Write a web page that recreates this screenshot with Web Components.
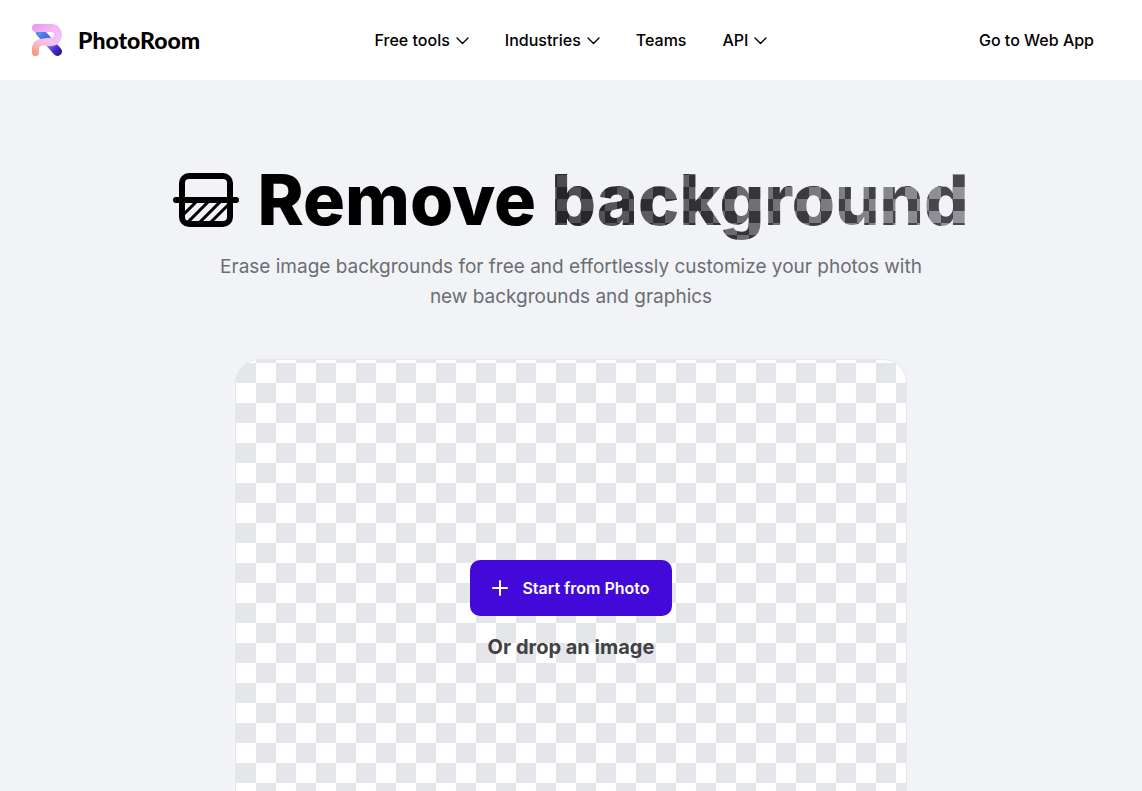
<!DOCTYPE html>
<html lang="en">
<head>
<meta charset="utf-8">
<meta name="viewport" content="width=device-width, initial-scale=1">
<title>Remove background - PhotoRoom</title>
<style>
html { background: #f1f3f7; }
body { margin: 0; font-family: Inter, "Noto Sans", sans-serif; color: #000; }
</style>
</head>
<body>
<pr-header>
  <pr-logo slot="brand"></pr-logo>
  <pr-nav-item menu>Free tools</pr-nav-item>
  <pr-nav-item menu>Industries</pr-nav-item>
  <pr-nav-item>Teams</pr-nav-item>
  <pr-nav-item menu>API</pr-nav-item>
  <pr-nav-item slot="action">Go to Web App</pr-nav-item>
</pr-header>
<main>
  <pr-hero>
    Remove
    <span slot="faded">background</span>
    <span slot="lead">Erase image backgrounds for free and effortlessly customize your photos with new backgrounds and graphics</span>
  </pr-hero>
  <pr-dropzone>
    <pr-button>Start from Photo</pr-button>
    <span slot="hint">Or drop an image</span>
  </pr-dropzone>
</main>
<script>
const define = (name, html, setup) => {
  const template = document.createElement('template');
  template.innerHTML = html;
  customElements.define(name, class extends HTMLElement {
    constructor() {
      super();
      this.attachShadow({ mode: 'open' }).append(template.content.cloneNode(true));
    }
    connectedCallback() { if (setup) setup(this, this.shadowRoot); }
  });
};

define('pr-header', `
<style>
:host { display: block; background: #fff; }
header { display: grid; grid-template-columns: 1fr auto 1fr; align-items: center; height: 80px; padding: 0 48px 0 32px; }
nav { display: flex; gap: 36px; margin-left: 16px; }
.action { justify-self: end; }
</style>
<header>
  <slot name="brand"></slot>
  <nav aria-label="Main"><slot></slot></nav>
  <div class="action"><slot name="action"></slot></div>
</header>`);

define('pr-logo', `
<style>
:host { display: block; }
a { display: flex; width: fit-content; align-items: center; gap: 16px; color: #000; text-decoration: none; font: 900 23px/32px Lato, sans-serif; }
svg { display: block; }
</style>
<a href="#">
<svg width="30" height="32" viewBox="0 0 30 32" fill="none" stroke-linecap="round" aria-hidden="true">
  <defs>
    <linearGradient id="blue" x1="4" y1="6" x2="27" y2="30" gradientUnits="userSpaceOnUse">
      <stop offset="0" stop-color="#4bb0f6"/><stop offset=".35" stop-color="#4f66e0"/><stop offset=".6" stop-color="#8a7bf0"/><stop offset=".8" stop-color="#4b30cb"/><stop offset="1" stop-color="#2d179f"/>
    </linearGradient>
    <linearGradient id="pink" x1="4" y1="0" x2="22" y2="22" gradientUnits="userSpaceOnUse">
      <stop offset="0" stop-color="#e99af0"/><stop offset=".5" stop-color="#f7b4f6"/><stop offset="1" stop-color="#f0c4fb"/>
    </linearGradient>
    <linearGradient id="peach" x1="3" y1="32" x2="12" y2="15" gradientUnits="userSpaceOnUse">
      <stop offset="0" stop-color="#f79372"/><stop offset=".5" stop-color="#f6b6b5"/><stop offset="1" stop-color="#f4c4f5"/>
    </linearGradient>
  </defs>
  <path d="M8 8l17.500 19.500" stroke="url(#blue)" stroke-width="9"/>
  <path d="M4 4H19c4.500 0 7 3 7 7s-3 7-7 7h-4" stroke="url(#pink)" stroke-width="8"/>
  <path d="M3.500 28.500V25c0-4.500 3-7 7.500-7h5" stroke="url(#peach)" stroke-width="7"/>
</svg>
<span>PhotoRoom</span>
</a>`);

define('pr-nav-item', `
<style>
:host { display: block; }
button, a { display: flex; align-items: center; gap: 6px; padding: 0; border: 0; background: none; color: #000; text-decoration: none; font: 500 16px/24px Inter, sans-serif; cursor: pointer; white-space: nowrap; }
svg { display: block; margin-top: 1px; }
</style>
<a href="#"><slot></slot></a>`, (host, root) => {
  if (!host.hasAttribute('menu') || root.querySelector('button')) return;
  const button = document.createElement('button');
  button.type = 'button';
  button.setAttribute('aria-haspopup', 'true');
  button.innerHTML = '<slot></slot><svg width="13" height="8" viewBox="0 0 13 8" fill="none" stroke="#000" stroke-width="1.400" stroke-linecap="round" stroke-linejoin="round" aria-hidden="true"><path d="M1 1l5.500 5.500L12 1"/></svg>';
  root.querySelector('a').replaceWith(button);
});

define('pr-hero', `
<style>
:host { display: block; padding: 75px 24px 0; text-align: center; }
.title { display: flex; justify-content: center; align-items: center; gap: 18px; }
svg { display: block; flex: none; }
h1 { margin: 0; font: 800 70px/90px Inter, sans-serif; }
.faded {
  display: inline-block; line-height: 90px; color: transparent;
  background:
    conic-gradient(transparent 25%, rgb(0 0 0 / 50%) 0 50%, transparent 0 75%, rgb(0 0 0 / 50%) 0) 6px 8px / 24px 24px,
    linear-gradient(90deg, #4a4a4e, #94949c);
  -webkit-background-clip: text; background-clip: text;
}
p { max-width: 720px; margin: 7px auto 0; color: #6c6d73; font: 400 19px/30px Inter, sans-serif; }
</style>
<div class="title">
  <svg width="66" height="54" viewBox="0 0 66 54" fill="none" stroke="#000" aria-hidden="true">
    <defs><clipPath id="lower"><path d="M9 26h48v22H9z"/></clipPath></defs>
    <rect x="9" y="3" width="48" height="48" rx="7" stroke-width="6"/>
    <path d="M3 27h60" stroke-width="6" stroke-linecap="round"/>
    <g clip-path="url(#lower)" stroke-width="3"><path d="M8 44l20-20M14 50l26-26M26 50l26-26M37 50l22-22"/></g>
  </svg>
  <h1><slot></slot> <span class="faded"><slot name="faded"></slot></span></h1>
</div>
<p><slot name="lead"></slot></p>`);

define('pr-dropzone', `
<style>
:host { display: block; padding: 47px 24px; }
section {
  box-sizing: border-box; display: flex; flex-direction: column; align-items: center; justify-content: center; gap: 16px;
  max-width: 672px; min-height: 504px; margin: 0 auto; border: 1px solid #e5e7eb; border-radius: 24px;
  background: conic-gradient(#fff 25%, #e4e6ea 0 50%, #fff 0 75%, #e4e6ea 0) 0 3px / 40px 40px;
}
p { margin: 0; color: #404145; font: 700 20px/30px Inter, sans-serif; }
</style>
<section aria-label="Drop an image">
  <slot></slot>
  <p><slot name="hint"></slot></p>
</section>`);

define('pr-button', `
<style>
:host { display: block; }
button { display: flex; align-items: center; gap: 14px; height: 56px; padding: 0 22px; border: 0; border-radius: 10px; background: #4209d9; color: #fff; font: 600 16px/24px Inter, sans-serif; cursor: pointer; }
svg { display: block; }
</style>
<button type="button">
  <svg width="16" height="16" viewBox="0 0 16 16" stroke="#fff" stroke-width="2" stroke-linecap="round" aria-hidden="true"><path d="M8 1v14M1 8h14"/></svg>
  <span><slot></slot></span>
</button>`);
</script>
</body>
</html>
